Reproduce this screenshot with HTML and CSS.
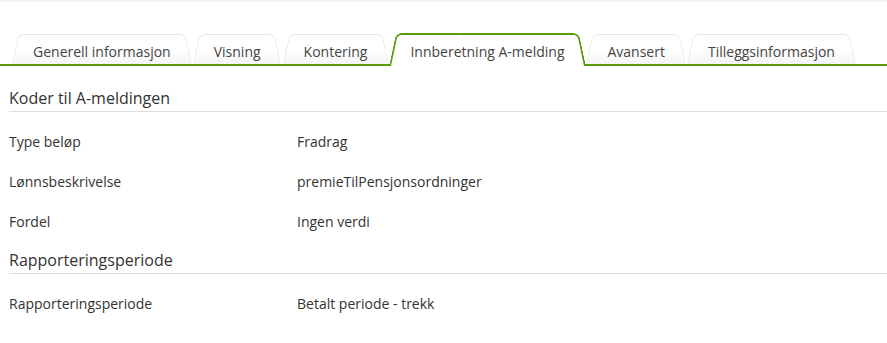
FILE: index.html
```html
<!DOCTYPE html>
<html lang="no">
<head>
    <meta charset="utf-8">
    <title>Lønnsart - Innberetning A-melding</title>
    <link rel="stylesheet" href="styles.css">
</head>
<body>
    <div class="topbar"></div>

    <!-- Faner -->
    <ul class="tabs">
        <li class="tab">Generell informasjon</li>
        <li class="tab">Visning</li>
        <li class="tab">Kontering</li>
        <li class="tab active">Innberetning A-melding</li>
        <li class="tab">Avansert</li>
        <li class="tab">Tilleggsinformasjon</li>
    </ul>

    <div class="panel">
        <section class="group">
            <h2>Koder til A-meldingen</h2>
            <div class="fields">
                <div class="row"><span class="label">Type beløp</span><span class="value">Fradrag</span></div>
                <div class="row"><span class="label">Lønnsbeskrivelse</span><span class="value">premieTilPensjonsordninger</span></div>
                <div class="row"><span class="label">Fordel</span><span class="value">Ingen verdi</span></div>
            </div>
        </section>

        <section class="group">
            <h2>Rapporteringsperiode</h2>
            <div class="fields">
                <div class="row"><span class="label">Rapporteringsperiode</span><span class="value">Betalt periode - trekk</span></div>
            </div>
        </section>
    </div>
</body>
</html>
```

FILE: styles.css
```css
body {
    margin: 0;
    font-family: "Open Sans", "DejaVu Sans", sans-serif;
    color: #333;
    background: #fff;
}

.topbar {
    height: 2px;
    background-color: #f2f2f2;
}

/* Faner */
.tabs {
    display: flex;
    align-items: flex-end;
    list-style: none;
    margin: 0;
    padding: 32px 0 0 12px;
    border-bottom: 2px solid #5b9a0b;
}

.tab {
    position: relative;
    box-sizing: border-box;
    height: 30px;
    padding: 4px 21px 0;
    margin-right: 1px;
    line-height: 27px;
    font-size: 14px;
    color: #444;
    white-space: nowrap;
    z-index: 1;
}

.tab::before,
.tab::after {
    content: "";
    position: absolute;
    top: 0;
    bottom: 0;
    width: 60%;
    border: 1px solid #e2e9ee;
    border-bottom: none;
    background: linear-gradient(#fff 55%, #f3f4f5);
    z-index: -1;
    transform-origin: bottom;
}

.tab::before {
    left: 0;
    border-right: none;
    border-radius: 6px 0 0 0;
    transform: skewX(-12deg);
}

.tab::after {
    right: 0;
    border-left: none;
    border-radius: 0 6px 0 0;
    transform: skewX(12deg);
}

.tab.active {
    height: 32px;
    margin-bottom: -2px;
    z-index: 2;
}

.tab.active::before,
.tab.active::after {
    top: -1px;
    border-width: 2px;
    border-color: #5b9a0b;
    background: #fff;
}

/* Innhold */
.panel {
    padding: 21px 0 0 9px;
}

.group + .group {
    margin-top: 7px;
}

.group h2 {
    margin: 0;
    padding-bottom: 2px;
    font-size: 16px;
    font-weight: normal;
    line-height: 22px;
    color: #333;
    border-bottom: 1px solid #dcdcdc;
}

.fields {
    padding-top: 10px;
}

.row {
    display: flex;
    height: 40px;
    line-height: 40px;
    font-size: 14px;
}

.label {
    width: 288px;
}
```
